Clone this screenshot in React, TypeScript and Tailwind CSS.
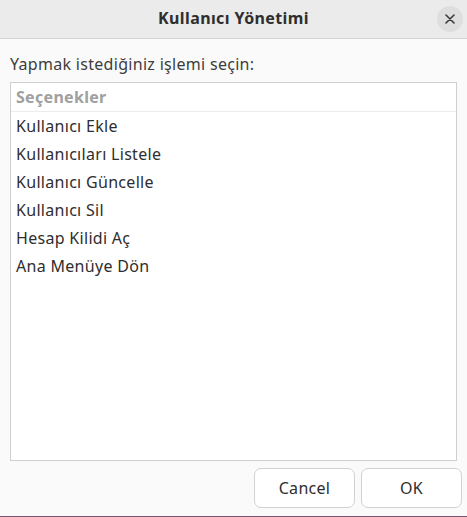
const options = [
  'Kullanıcı Ekle',
  'Kullanıcıları Listele',
  'Kullanıcı Güncelle',
  'Kullanıcı Sil',
  'Hesap Kilidi Aç',
  'Ana Menüye Dön',
]

const font = { fontFamily: '"Noto Sans", "Open Sans", sans-serif' }

export default function App() {
  return (
    <div className="flex h-[517px] w-[467px] flex-col bg-[#fafafa] text-[#3d3d3d]" style={font}>
      {/* header bar */}
      <div className="relative flex h-[39px] shrink-0 items-center justify-center border-b border-[#d6d6d6] bg-[#ebebeb] pb-[3px]">
        <span className="text-[16px] font-bold tracking-[0.4px] text-[#2e2e2e]">Kullanıcı Yönetimi</span>
        <button className="absolute right-[4px] top-[6px] flex h-[26px] w-[26px] items-center justify-center rounded-full bg-[#dedede]">
          <svg width="10" height="10" viewBox="0 0 10 10" stroke="#3a3a3a" strokeWidth="1.6" strokeLinecap="round">
            <path d="M1 1 L9 9 M9 1 L1 9" />
          </svg>
        </button>
      </div>

      <div className="flex flex-1 flex-col px-[10px] pt-[14px]">
        <p className="text-[16px] leading-[22px] tracking-[0.3px] text-[#3d3d3d]">Yapmak istediğiniz işlemi seçin:</p>

        <div className="mt-[7px] flex h-[379px] flex-col border border-[#cfcfcf] bg-white">
          <div className="flex h-[29px] items-center border-b border-[#ececec] px-[5px] text-[16px] font-bold tracking-[0.3px] text-[#a0a0a0]">
            Seçenekler
          </div>
          <div className="flex flex-col">
            {options.map((o) => (
              <div key={o} className="flex h-[28px] items-center px-[5px] text-[16px] tracking-[0.3px] text-[#2e2e2e]">
                {o}
              </div>
            ))}
          </div>
        </div>

        <div className="mt-[7px] flex justify-end gap-[6px]">
          <button className="h-[40px] w-[101px] rounded-[7px] border border-[#d2d2d2] bg-white text-[16px] tracking-[0.3px] text-[#2e2e2e]">
            Cancel
          </button>
          <button className="mr-[-5px] h-[40px] w-[101px] rounded-[7px] border border-[#d2d2d2] bg-white text-[16px] tracking-[0.3px] text-[#2e2e2e]">
            OK
          </button>
        </div>
      </div>
      <div className="h-[1px] bg-[#7a5270]" />
    </div>
  )
}
